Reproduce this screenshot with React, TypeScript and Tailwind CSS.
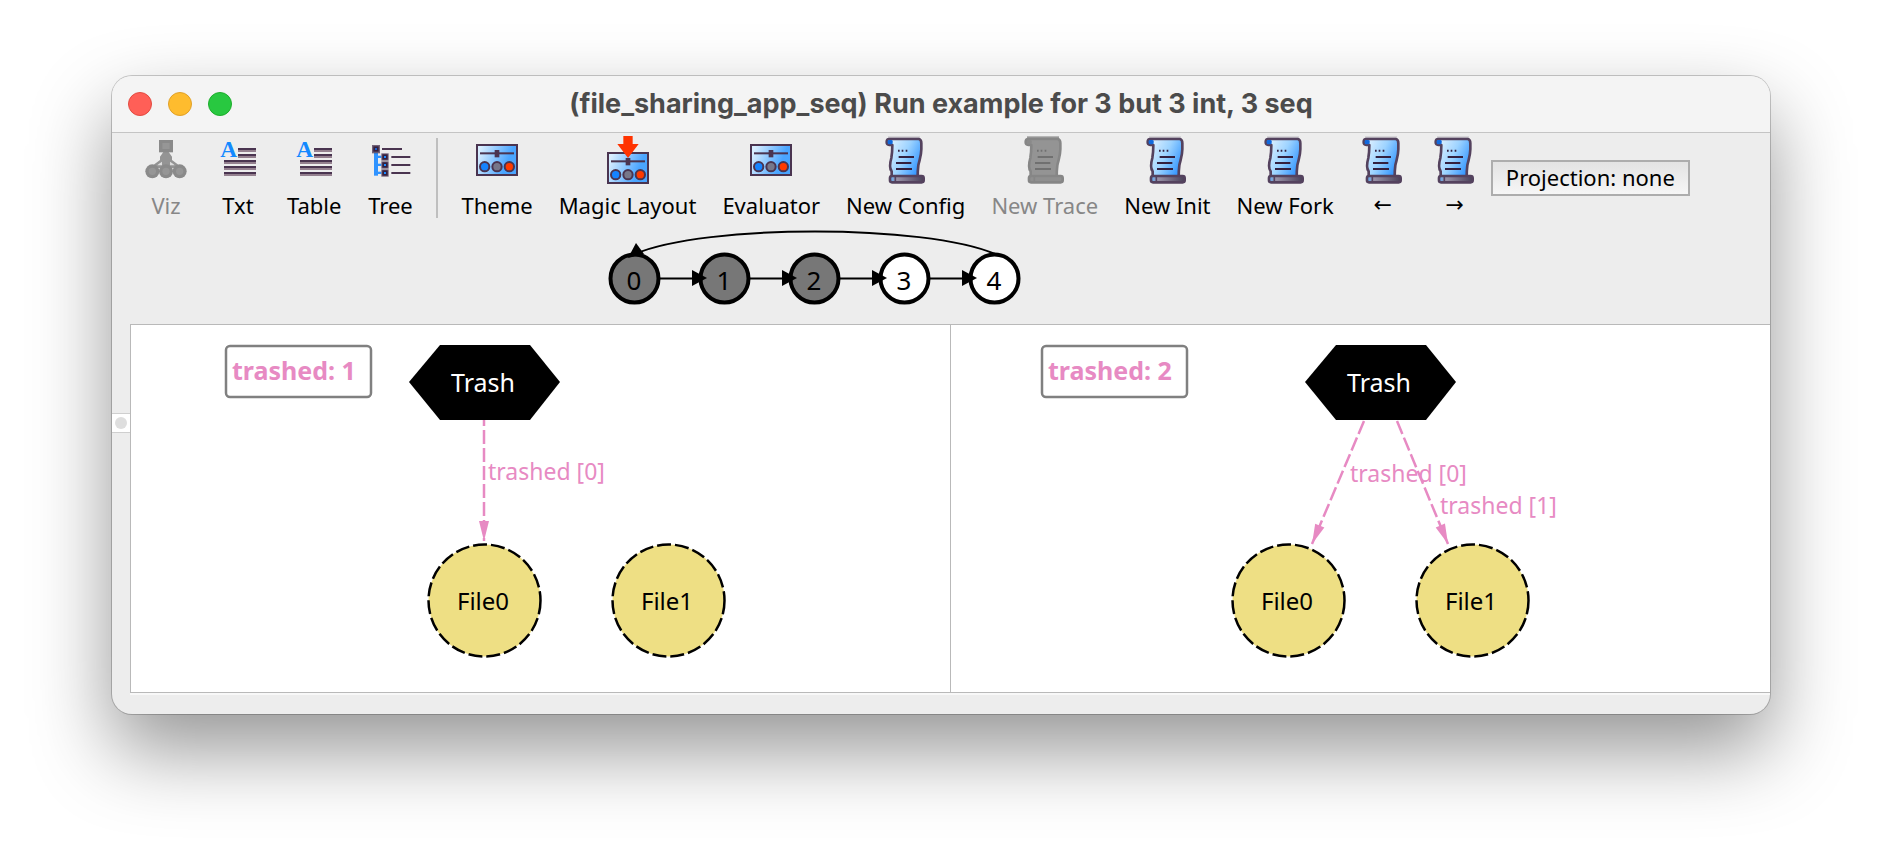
import type { ReactNode } from "react";

const INK = "#4a3450";

function IconBox({ children }: { children: ReactNode }) {
  return (
    <svg viewBox="0 0 144 144" className="-mx-1 size-12 shrink-0" aria-hidden="true">
      {children}
    </svg>
  );
}

function VizIcon() {
  return (
    <IconBox>
      <path d="M64 48H80L90 62V72L106 84L116 96H28L38 84L54 72V62Z" fill="#949494" />
      <path d="M50 84L60 77V88H46ZM94 84L84 77V88H98Z" fill="#dcdcdc" />
      <rect x="51" y="12" width="42" height="37" fill="#8a8a8a" />
      <rect x="61" y="21" width="22" height="18" fill="#969696" />
      {[31, 72, 113].map((cx) => (
        <g key={cx}>
          <circle cx={cx} cy="106" r="21" fill="#8a8a8a" />
          <circle cx={cx} cy="106" r="11" fill="#969696" />
        </g>
      ))}
    </IconBox>
  );
}

function TextIcon() {
  return (
    <IconBox>
      {[
        [72, 36],
        [72, 54],
        [30, 72],
        [30, 90],
        [30, 108],
      ].map(([x, y]) => (
        <g key={y}>
          <rect x={x} y={y} width={126 - x} height="6" fill={INK} />
          <rect x={x} y={y + 6} width={126 - x} height="6" fill="#94808f" />
        </g>
      ))}
      <text x="19" y="64" fontSize="70" fontWeight="700" fontFamily="Liberation Serif, serif" fill="#1389ff">
        A
      </text>
    </IconBox>
  );
}

function TreeIcon() {
  return (
    <IconBox>
      <rect x="24" y="50" width="12" height="69" fill="#2f93ff" />
      <rect x="48" y="36" width="60" height="6" fill={INK} />
      <rect x="18" y="27" width="24" height="25" fill={INK} opacity="0.75" />
      <rect x="22" y="31" width="16" height="16" fill="#33203f" />
      <rect x="27" y="36" width="6" height="6" fill="#1c5fd0" />
      {[63, 87, 111].map((y) => (
        <g key={y}>
          <rect x="36" y={y - 4} width="10" height="7" fill="#2f93ff" />
          <rect x="76" y={y - 3} width="57" height="6" fill={INK} />
          <rect x="46" y={y - 11} width="22" height="22" fill={INK} opacity="0.75" />
          <rect x="49" y={y - 8} width="16" height="16" fill="#33203f" />
          <rect x="54" y={y - 3} width="6" height="6" fill="#1c8bff" />
        </g>
      ))}
    </IconBox>
  );
}

function Panel({ y }: { y: number }) {
  return (
    <>
      <defs>
        <linearGradient id="panel" x1="0" y1="0.2" x2="1" y2="0.5">
          <stop offset="0.05" stopColor="#d9eeff" />
          <stop offset="0.8" stopColor="#4aa5ff" />
        </linearGradient>
      </defs>
      <rect x="12" y={y + 3} width="120" height="90" fill="url(#panel)" stroke={INK} strokeWidth="6" />
      <rect x="21" y={y + 25} width="102" height="6" fill={INK} />
      <rect x="65" y={y + 18} width="14" height="22" fill={INK} />
      <circle cx="35" cy={y + 68} r="14" fill="#1583ff" stroke={INK} strokeWidth="6" />
      <circle cx="72" cy={y + 68} r="14" fill="#77778a" stroke={INK} strokeWidth="6" />
      <circle cx="109" cy={y + 68} r="14" fill="#ff3a00" stroke={INK} strokeWidth="6" />
    </>
  );
}

function PanelIcon() {
  return (
    <IconBox>
      <Panel y={24} />
    </IconBox>
  );
}

function MagicIcon() {
  return (
    <IconBox>
      <Panel y={48} />
      <path d="M58 0H86V24H104L72 66L40 24H58Z" fill="#ff3300" />
    </IconBox>
  );
}

function ScrollIcon({ muted = false }: { muted?: boolean }) {
  const line = muted ? "#707070" : "#33203f";
  const edge = muted ? "#868686" : "#54425e";
  return (
    <IconBox>
      <defs>
        <linearGradient id="paper" x1="0" y1="0.2" x2="1" y2="0.7">
          <stop offset="0.1" stopColor="#d4ecff" />
          <stop offset="0.5" stopColor="#9dd3ff" />
          <stop offset="1" stopColor="#2f93ff" />
        </linearGradient>
        <linearGradient id="roll" x1="0" y1="0" x2="1" y2="0">
          <stop offset="0" stopColor="#5db2ff" />
          <stop offset="0.2" stopColor="#9a93a8" />
          <stop offset="1" stopColor="#4a4058" />
        </linearGradient>
      </defs>
      <rect x="18" y="1" width="96" height="7" fill={muted ? "#9a9a9a" : "#cdcbd0"} />
      <path
        d="M22 9H110Q118 10 118 22V40C118 60 112 72 109 88Q107 104 107 122H29V106C21 96 24 80 28 66C30 54 31 40 31 27H22Q14 26 14 18Q14 9 22 9Z"
        fill={muted ? "#949494" : "url(#paper)"}
        stroke={edge}
        strokeWidth="8"
        strokeLinejoin="round"
      />
      <rect x="17" y="12" width="15" height="13" rx="4" fill={muted ? "#8a8a8a" : "#1169dd"} />
      <rect x="24" y="120" width="101" height="19" rx="6" fill={muted ? "#8f8f8f" : "url(#roll)"} stroke={edge} strokeWidth="8" />
      <path d="M40 121V138" stroke={edge} strokeWidth="5" />
      <path d="M48 44H53M59 44H64M71 44H76" stroke={line} strokeWidth="6" />
      <path d="M50 63H96M42 81H88M42 99H90" stroke={line} strokeWidth="6" />
    </IconBox>
  );
}

function ToolButton({ label, icon, disabled = false }: { label: string; icon: ReactNode; disabled?: boolean }) {
  return (
    <button
      type="button"
      disabled={disabled}
      className="flex min-w-[72px] shrink-0 flex-col items-center gap-[7px] px-[13px] pt-[3px] text-[22px] leading-7 whitespace-nowrap text-black disabled:text-[#878787]"
    >
      {icon}
      <span>{label}</span>
    </button>
  );
}

function StepButton({ arrow, label }: { arrow: string; label: string }) {
  return (
    <button
      type="button"
      aria-label={label}
      className="flex w-[72px] shrink-0 flex-col items-center gap-[7px] pt-[3px] font-['DejaVu_Sans',sans-serif] text-[22px] leading-7"
    >
      <ScrollIcon />
      <span>{arrow}</span>
    </button>
  );
}

const STATES = [0, 1, 2, 3, 4];

function TraceGraph() {
  return (
    <svg viewBox="0 0 450 100" className="ml-[478px] block h-[100px] w-[450px]" role="img" aria-label="Trace states">
      <path d="M405 34C335 4 115 4 45 34" fill="none" stroke="#000" strokeWidth="2" />
      {STATES.map((n) => (
        <circle key={n} cx={44.5 + n * 90} cy="58.5" r="24" fill={n < 3 ? "#777777" : "#ffffff"} stroke="#000" strokeWidth="4" />
      ))}
      {STATES.slice(1).map((n) => (
        <g key={n}>
          <path d={`M${n * 90 - 20} 58.5H${n * 90 + 14}`} stroke="#000" strokeWidth="2" />
          <path d={`M${n * 90 + 12} 50L${n * 90 + 27} 58L${n * 90 + 12} 66Z`} />
        </g>
      ))}
      <path d="M46 23L38 38L54 34Z" />
      {STATES.map((n) => (
        <text key={n} x={44 + n * 90} y="70" fontSize="26" textAnchor="middle">
          {n}
        </text>
      ))}
    </svg>
  );
}

const PINK = "#e78ac3";

function Summary({ x, count }: { x: number; count: number }) {
  return (
    <>
      <rect x={x} y="21" width="145" height="51" rx="4" fill="#fff" stroke="#808080" strokeWidth="2.500" />
      <text x={x + 6} y="55" fontSize="25" fontWeight="700" fill={PINK}>
        trashed: {count}
      </text>
    </>
  );
}

function Trash({ cx }: { cx: number }) {
  return (
    <>
      <path d={`M${cx - 76} 57L${cx - 45} 20H${cx + 45}L${cx + 75} 57L${cx + 45} 95H${cx - 45}Z`} />
      <text x={cx - 2} y="67" fontSize="25" textAnchor="middle" fill="#fff">
        Trash
      </text>
    </>
  );
}

function FileNode({ cx, name }: { cx: number; name: string }) {
  return (
    <>
      <circle cx={cx - 0.5} cy="275.5" r="56" fill="#eedf84" stroke="#000" strokeWidth="2.500" strokeDasharray="14 4" />
      <text x={cx - 2} y="285" fontSize="24" textAnchor="middle">
        {name}
      </text>
    </>
  );
}

function Edge({ x1, y1, x2, y2 }: { x1: number; y1: number; x2: number; y2: number }) {
  const angle = (Math.atan2(y2 - y1, x2 - x1) * 180) / Math.PI;
  return (
    <>
      <path d={`M${x1} ${y1}L${x2} ${y2}`} stroke={PINK} strokeWidth="2.500" strokeDasharray="14 4" />
      <path d="M0 0L-20 5V-5Z" fill={PINK} transform={`translate(${x2} ${y2}) rotate(${angle})`} />
    </>
  );
}

function EdgeLabel({ x, y, index }: { x: number; y: number; index: number }) {
  return (
    <text x={x} y={y} fontSize="23" fill={PINK}>
      trashed [{index}]
    </text>
  );
}

function Canvas({ label, children }: { label: string; children: ReactNode }) {
  return (
    <div className="min-w-0 flex-1 border-t border-b border-l border-[#b9b9b9] bg-white">
      <svg viewBox="0 0 819 367" className="block h-[367px] w-[819px] max-w-full" role="img" aria-label={label}>
        {children}
      </svg>
    </div>
  );
}

export default function App() {
  return (
    <div className="min-h-screen bg-white px-28 pt-[76px] pb-[148px] font-['Noto_Sans',sans-serif] text-black">
      <div className="overflow-hidden rounded-[20px] bg-[#ededed] shadow-[0_0_0_1px_rgba(0,0,0,0.2),0_36px_80px_rgba(0,0,0,0.42)]">
        <header className="grid h-[57px] grid-cols-[1fr_auto_1fr] items-center border-b border-[#c4c4c4] bg-[#f4f4f4] px-4">
          <div className="flex gap-4">
            <button type="button" aria-label="Close" className="size-6 rounded-full border border-[#e24b41] bg-[#ff5f57]" />
            <button type="button" aria-label="Minimize" className="size-6 rounded-full border border-[#e0a028] bg-[#febc2e]" />
            <button type="button" aria-label="Zoom" className="size-6 rounded-full border border-[#1dad2b] bg-[#28c840]" />
          </div>
          <h1 className="font-['Inter',sans-serif] text-[27px] leading-8 font-bold text-[#4b4b4b]">
            (file_sharing_app_seq) Run example for 3 but 3 int, 3 seq
          </h1>
        </header>

        <div className="flex h-[87px] pl-[18px]">
          <ToolButton label="Viz" icon={<VizIcon />} disabled />
          <ToolButton label="Txt" icon={<TextIcon />} />
          <ToolButton label="Table" icon={<TextIcon />} />
          <ToolButton label="Tree" icon={<TreeIcon />} />
          <div className="mx-2.5 mt-[5px] h-20 w-0.5 bg-[#bfbfbf]" />
          <ToolButton label="Theme" icon={<PanelIcon />} />
          <ToolButton label="Magic Layout" icon={<MagicIcon />} />
          <ToolButton label="Evaluator" icon={<PanelIcon />} />
          <ToolButton label="New Config" icon={<ScrollIcon />} />
          <ToolButton label="New Trace" icon={<ScrollIcon muted />} disabled />
          <ToolButton label="New Init" icon={<ScrollIcon />} />
          <ToolButton label="New Fork" icon={<ScrollIcon />} />
          <StepButton arrow="←" label="Previous state" />
          <StepButton arrow="→" label="Next state" />
          <button
            type="button"
            className="mt-[27px] h-9 shrink-0 border-2 border-[#adadad] bg-linear-to-b from-[#e3e3e3] to-[#f6f6f6] px-[13px] pb-0.5 text-[22px] leading-7 whitespace-nowrap"
          >
            Projection: none
          </button>
        </div>

        <TraceGraph />

        <div className="flex pt-1">
          <div className="flex w-[18px] shrink-0 flex-col pt-[89px]">
            <div className="flex h-5 items-center justify-center border-y border-[#cfcfcf] bg-white">
              <span className="size-3 rounded-full bg-[#dedede]" />
            </div>
          </div>
          <Canvas label="State 1">
            <Edge x1={353} y1={87} x2={353} y2={216} />
            <Summary x={95} count={1} />
            <Trash cx={354} />
            <FileNode cx={354} name="File0" />
            <FileNode cx={538} name="File1" />
            <EdgeLabel x={357} y={155} index={0} />
          </Canvas>
          <Canvas label="State 2">
            <Edge x1={413} y1={96} x2={361} y2={219} />
            <Edge x1={446} y1={96} x2={497} y2={219} />
            <Summary x={91} count={2} />
            <Trash cx={430} />
            <FileNode cx={338} name="File0" />
            <FileNode cx={522} name="File1" />
            <EdgeLabel x={399} y={157} index={0} />
            <EdgeLabel x={489} y={189} index={1} />
          </Canvas>
        </div>
        <div className="ml-[18px] h-[21px] border-t-2 border-[#f8f8f8]" />
      </div>
    </div>
  );
}
